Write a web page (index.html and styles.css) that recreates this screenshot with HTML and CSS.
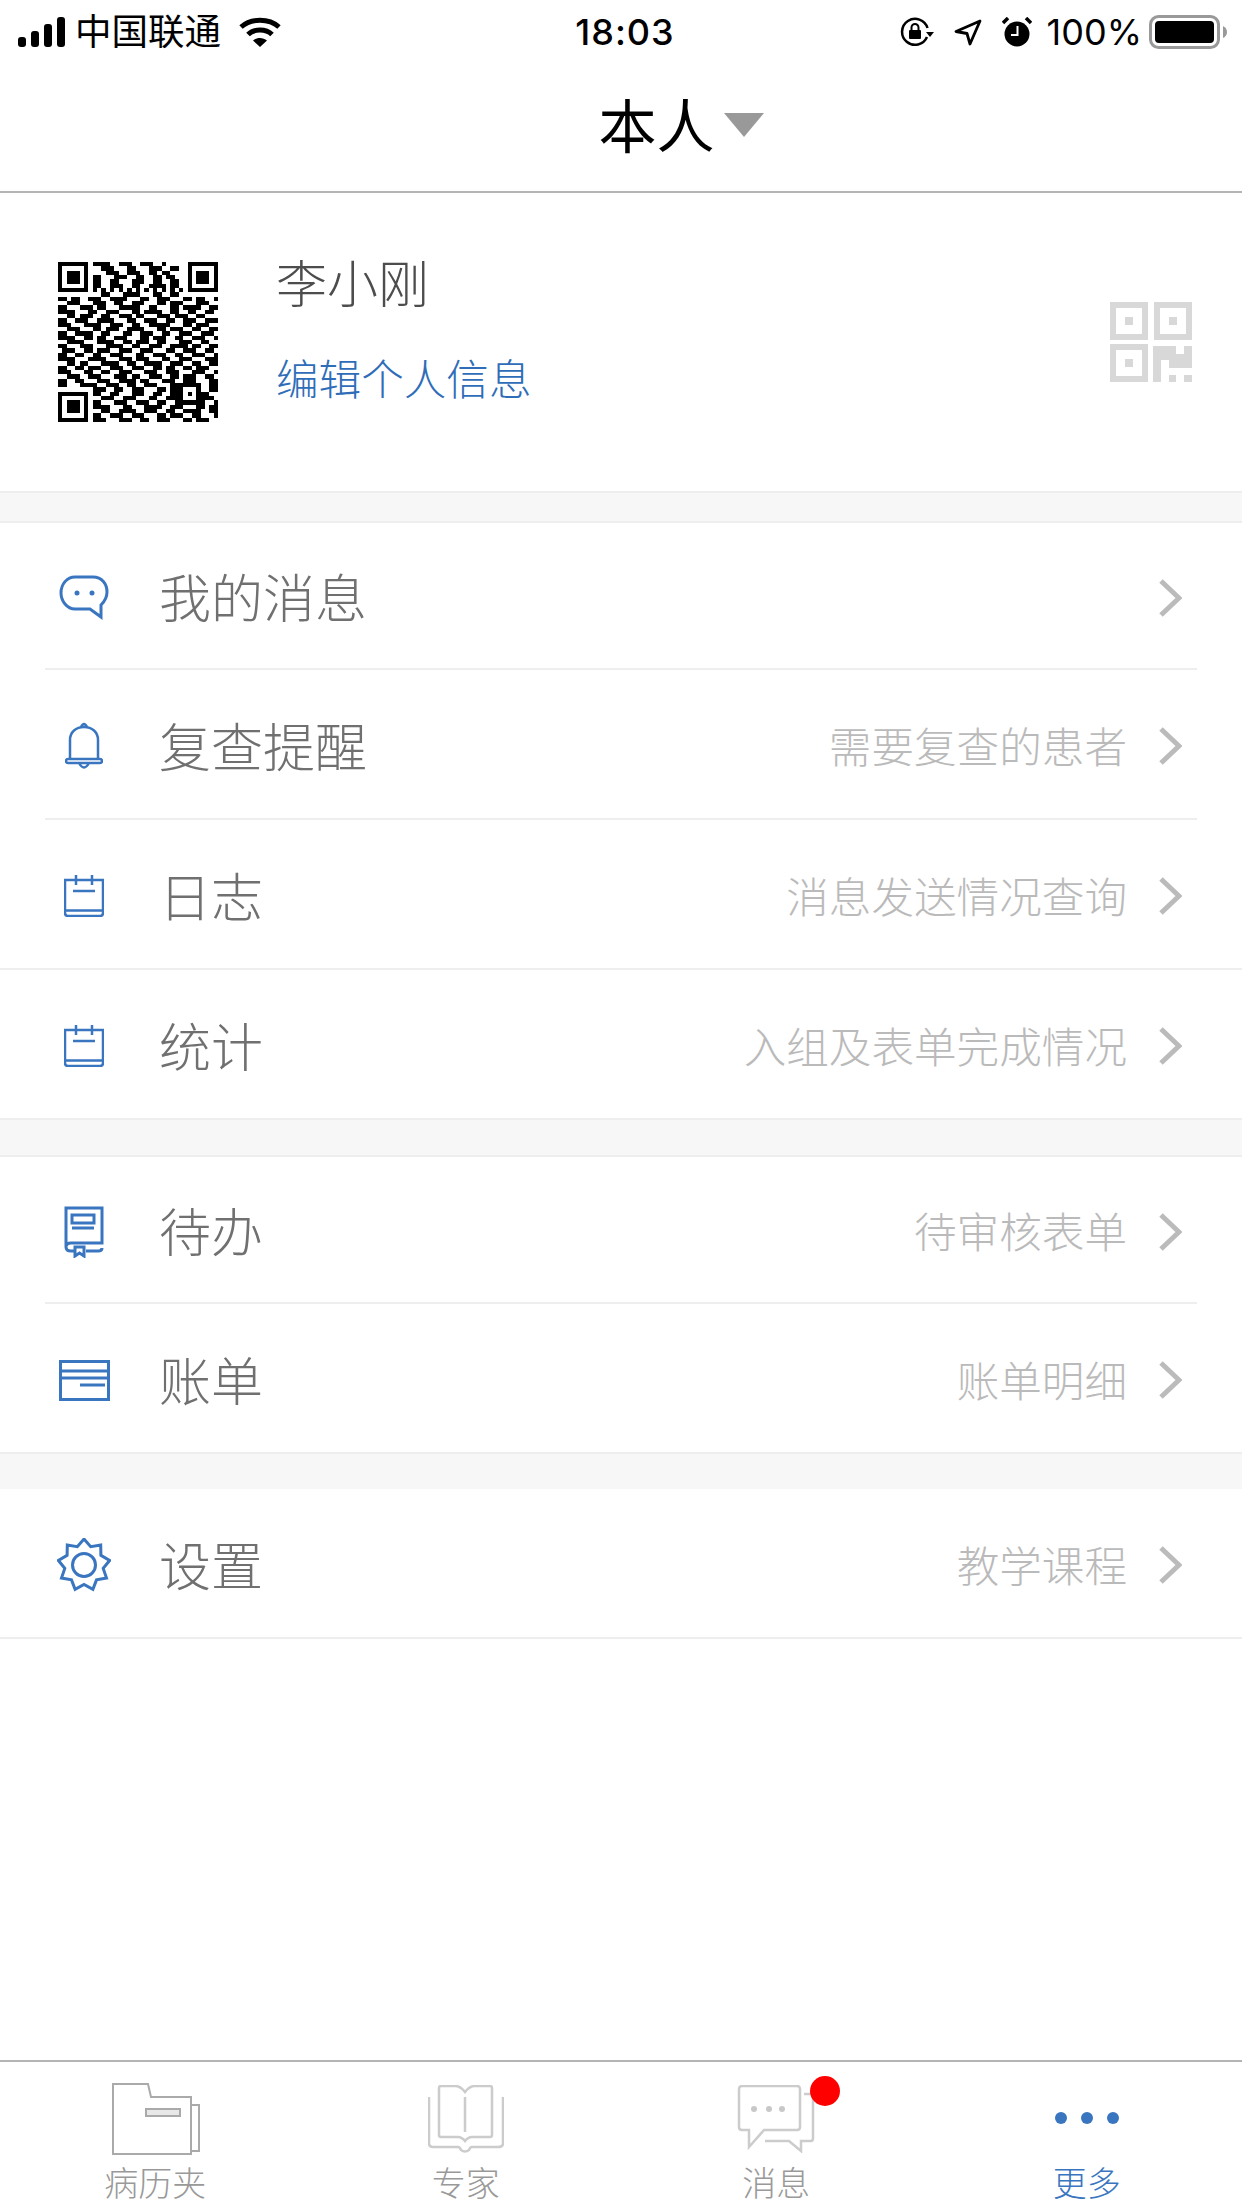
FILE: index.html
```html
<!DOCTYPE html>
<html lang="zh-CN">
<head>
    <meta charset="UTF-8">
    <meta name="viewport" content="width=device-width, initial-scale=1.0">
    <title>更多</title>
    <link rel="stylesheet" href="styles.css">
</head>
<body>
    <div class="status-bar">
        <div class="status-left">
            <svg class="signal" width="48" height="30" viewBox="0 0 48 30">
                <rect x="0" y="20" width="8" height="10" rx="3"/>
                <rect x="13" y="14" width="8" height="16" rx="3"/>
                <rect x="26" y="7" width="8" height="23" rx="3"/>
                <rect x="39" y="0" width="8" height="30" rx="3"/>
            </svg>
            <span class="carrier">中国联通</span>
            <svg class="wifi" width="42" height="30" viewBox="0 0 42 30">
                <path d="M2 10C12 1 30 1 40 10M9 17.5C15 11.5 27 11.5 33 17.5" fill="none" stroke="#000" stroke-width="5"/>
                <path d="M14 23.5C18 20 24 20 28 23.5L21 30Z"/>
            </svg>
        </div>
        <div class="status-time">18:03</div>
        <div class="status-right">
            <svg width="34" height="30" viewBox="0 0 34 30">
                <path d="M27 20A13 13 0 1 1 27.500 11" fill="none" stroke="#000" stroke-width="2.500"/>
                <path d="M34 15H26L30 20Z"/>
                <rect x="9" y="13" width="12" height="9" rx="1"/>
                <path d="M11.500 13V10.500A3.500 3.500 0 0 1 18.500 10.500V13" fill="none" stroke="#000" stroke-width="2"/>
            </svg>
            <svg class="arrow" width="28" height="27" viewBox="0 0 28 27">
                <path d="M26 2L2 12.500L13 14.500L16 25Z" fill="none" stroke="#000" stroke-width="2.800" stroke-linejoin="round"/>
            </svg>
            <svg class="alarm" width="30" height="30" viewBox="0 0 30 30">
                <circle cx="15" cy="17" r="12.500"/>
                <path d="M1 6L6 1M29 6L24 1" stroke="#000" stroke-width="3.500"/>
                <path d="M15.500 9V18H9" fill="none" stroke="#fff" stroke-width="2"/>
            </svg>
            <span class="battery-text">100%</span>
            <svg width="79" height="34" viewBox="0 0 79 34">
                <rect x="1.500" y="1.500" width="68" height="31" rx="8" fill="none" stroke="#999" stroke-width="3"/>
                <rect x="6" y="6" width="59" height="22" rx="4"/>
                <path d="M74 11Q78 13 78 17Q78 21 74 23Z" fill="#999"/>
            </svg>
        </div>
    </div>

    <div class="nav-bar">
        <span class="nav-title">本人</span>
        <span class="nav-caret"></span>
    </div>

    <div class="profile">
        <svg id="qrCode" class="qr-code" width="160" height="160" viewBox="0 0 37 37" shape-rendering="crispEdges"></svg>
        <div class="profile-info">
            <div class="profile-name">李小刚</div>
            <div class="profile-edit">编辑个人信息</div>
        </div>
        <svg class="qr-icon" width="82" height="81" viewBox="0 0 82 81">
            <path fill-rule="evenodd" d="M0 0H38V38H0ZM6 6V32H32V6ZM15 15H23V23H15Z"/>
            <path fill-rule="evenodd" d="M44 0H82V38H44ZM50 6V32H76V6ZM59 15H67V23H59Z"/>
            <path fill-rule="evenodd" d="M0 42H38V80H0ZM6 48V74H32V48ZM15 57H23V65H15Z"/>
            <path d="M43 44H66V52H74V44H82V66H59V58H51V80H43ZM59 73H66V80H59ZM74 73H82V80H74Z"/>
        </svg>
    </div>

    <div class="band band-first"></div>

    <div class="group">
        <div class="row inset first">
            <span class="row-icon">
                <svg width="50" height="45" viewBox="0 0 50 45">
                    <path class="thick" d="M16 2H34C43 2 48 9 48 17C48 23 46 26 42 30V42L31 34H16C8 34 2 26 2 18C2 9 8 2 16 2Z"/>
                    <circle class="dot" cx="18" cy="18" r="2.500"/>
                    <circle class="dot" cx="33" cy="18" r="2.500"/>
                </svg>
            </span>
            <span class="row-label">我的消息</span>
            <span class="row-chevron"><svg width="24" height="40" viewBox="0 0 24 40"><path d="M3 3L21 20L3 37"/></svg></span>
        </div>
        <div class="row inset">
            <span class="row-icon">
                <svg width="38" height="48" viewBox="0 0 38 48">
                    <path d="M5 37V18C5 10 11 5 19 5C27 5 33 10 33 18V37M3 37H35Q37 37 37 39Q37 41 35 41H3Q1 41 1 39Q1 37 3 37ZM16 5Q19 -1 22 5M14 41Q19 50 24 41"/>
                </svg>
            </span>
            <span class="row-label">复查提醒</span>
            <span class="row-hint">需要复查的患者</span>
            <span class="row-chevron"><svg width="24" height="40" viewBox="0 0 24 40"><path d="M3 3L21 20L3 37"/></svg></span>
        </div>
        <div class="row">
            <span class="row-icon">
                <svg width="40" height="42" viewBox="0 0 40 42">
                    <path d="M1 5H39V38Q39 41 36 41H4Q1 41 1 38ZM1 35.500H39M12 0V10M28 0V10M9 16H31"/>
                </svg>
            </span>
            <span class="row-label">日志</span>
            <span class="row-hint">消息发送情况查询</span>
            <span class="row-chevron"><svg width="24" height="40" viewBox="0 0 24 40"><path d="M3 3L21 20L3 37"/></svg></span>
        </div>
        <div class="row">
            <span class="row-icon">
                <svg width="40" height="42" viewBox="0 0 40 42">
                    <path d="M1 5H39V38Q39 41 36 41H4Q1 41 1 38ZM1 35.500H39M12 0V10M28 0V10M9 16H31"/>
                </svg>
            </span>
            <span class="row-label">统计</span>
            <span class="row-hint">入组及表单完成情况</span>
            <span class="row-chevron"><svg width="24" height="40" viewBox="0 0 24 40"><path d="M3 3L21 20L3 37"/></svg></span>
        </div>
    </div>

    <div class="band band-second"></div>

    <div class="group">
        <div class="row inset first">
            <span class="row-icon">
                <svg width="40" height="52" viewBox="0 0 40 52">
                    <path class="thick" d="M2 41V2H38V37H7Q2 37 2 41Q2 45 7 45H10M22 45H34Q38 45 38 42M8 9H30V17H8ZM8 22H30"/>
                    <path class="thick" d="M11 41H20V50L15.500 47L11 50Z"/>
                </svg>
            </span>
            <span class="row-label">待办</span>
            <span class="row-hint">待审核表单</span>
            <span class="row-chevron"><svg width="24" height="40" viewBox="0 0 24 40"><path d="M3 3L21 20L3 37"/></svg></span>
        </div>
        <div class="row">
            <span class="row-icon">
                <svg width="51" height="41" viewBox="0 0 51 41">
                    <path class="thick" d="M1.500 1.500H49.500V39.500H1.500ZM1.500 11H49.500M1.500 18H49.500M21 25H46"/>
                </svg>
            </span>
            <span class="row-label">账单</span>
            <span class="row-hint">账单明细</span>
            <span class="row-chevron"><svg width="24" height="40" viewBox="0 0 24 40"><path d="M3 3L21 20L3 37"/></svg></span>
        </div>
    </div>

    <div class="band band-third"></div>

    <div class="group">
        <div class="row">
            <span class="row-icon">
                <svg width="54" height="54" viewBox="0 0 54 54">
                    <polygon class="thick" points="27,1 33.700,8.700 43.700,7.100 43.900,17.300 52.600,22.500 46.200,30.400 49.500,40 39.500,41.900 35.900,51.400 27,46.500 18.100,51.400 14.500,41.900 4.500,40 7.800,30.400 1.400,22.500 10.100,17.300 10.300,7.100 20.300,8.700"/>
                    <circle class="thick" cx="27" cy="27" r="11.500"/>
                </svg>
            </span>
            <span class="row-label">设置</span>
            <span class="row-hint">教学课程</span>
            <span class="row-chevron"><svg width="24" height="40" viewBox="0 0 24 40"><path d="M3 3L21 20L3 37"/></svg></span>
        </div>
    </div>

    <div class="spacer"></div>

    <div class="tab-bar">
        <div class="tab">
            <span class="tab-icon">
                <svg class="folder" width="88" height="72" viewBox="0 0 88 72">
                    <path d="M1 1H36L39 14H79V71H1ZM79 22H87V68H79"/>
                    <rect x="34" y="26" width="34" height="7" fill="#e8e8e8"/>
                </svg>
            </span>
            <span class="tab-label">病历夹</span>
        </div>
        <div class="tab">
            <span class="tab-icon">
                <svg class="light" width="76" height="68" viewBox="0 0 76 68">
                    <path d="M37 7C34 3 30 1 27 1H13Q11 1 11 3V50Q11 52 13 52H30Q34 52 37 56Q40 52 44 52H62Q64 52 64 50V3Q64 1 62 1H47C44 1 40 3 37 7ZM37 12V47M1 12V58Q1 62 5 62H30Q32 62 33 65Q37 68 41 65Q42 62 44 62H70Q75 62 75 58V12"/>
                </svg>
            </span>
            <span class="tab-label">专家</span>
        </div>
        <div class="tab">
            <span class="tab-icon has-badge">
                <svg class="light" width="78" height="68" viewBox="0 0 78 68">
                    <path d="M5 1H60Q63 1 63 4V42Q63 45 60 45H27L12 62V45H5Q2 45 2 42V4Q2 1 5 1ZM28 56H52L64 66V56H74Q76 56 76 53V9H67"/>
                    <circle class="dots" cx="17" cy="24" r="3"/>
                    <circle class="dots" cx="32" cy="24" r="3"/>
                    <circle class="dots" cx="45" cy="24" r="3"/>
                </svg>
                <span class="badge"></span>
            </span>
            <span class="tab-label">消息</span>
        </div>
        <div class="tab active">
            <span class="tab-icon">
                <span class="more-dots"><i></i><i></i><i></i></span>
            </span>
            <span class="tab-label">更多</span>
        </div>
    </div>

    <script src="qr.js"></script>
</body>
</html>
```

FILE: styles.css
```css
* {
    box-sizing: border-box;
}
body {
    margin: 0;
    width: 1242px;
    height: 2208px;
    overflow: hidden;
    display: flex;
    flex-direction: column;
    background-color: #fff;
    font-family: "Noto Sans CJK SC", "Noto Sans", sans-serif;
    font-weight: 300;
}

/* status bar */
.status-bar {
    height: 64px;
    padding: 0 14px 0 18px;
    display: grid;
    grid-template-columns: 1fr auto 1fr;
    align-items: center;
    color: #000;
}
.status-left {
    display: flex;
    align-items: center;
}
.carrier {
    margin: 0 0 5px 9px;
    font-size: 36.500px;
    line-height: 44px;
    font-weight: 400;
}
.wifi {
    margin-left: 18px;
}
.status-time {
    margin-left: 4px;
    font-family: Inter, "Liberation Sans", sans-serif;
    font-size: 36px;
    letter-spacing: 1px;
    font-weight: 500;
}
.status-right {
    display: flex;
    align-items: center;
    justify-content: flex-end;
}
.status-right .arrow {
    margin-left: 20px;
}
.status-right .alarm {
    margin-left: 20px;
}
.battery-text {
    margin: 0 7px 0 15px;
    font-family: Inter, "Liberation Sans", sans-serif;
    font-size: 36px;
    font-weight: 400;
}

/* nav */
.nav-bar {
    height: 129px;
    padding: 0 0 10px 120px;
    display: flex;
    align-items: center;
    justify-content: center;
    border-bottom: 2px solid #b4b4b4;
}
.nav-title {
    font-size: 58px;
    font-weight: 400;
    color: #000;
}
.nav-caret {
    width: 0;
    height: 0;
    margin: 4px 0 0 9px;
    border-left: 20px solid transparent;
    border-right: 20px solid transparent;
    border-top: 24px solid #999;
}

/* profile */
.profile {
    height: 298px;
    padding: 0 50px 0 58px;
    display: flex;
    align-items: center;
}
.qr-code {
    flex: none;
}
.profile-info {
    flex: 1;
    margin-left: 58px;
    padding-bottom: 28px;
    display: flex;
    flex-direction: column;
    gap: 34px;
}
.profile-name {
    font-size: 51px;
    line-height: 64px;
    color: #4d4d4d;
}
.profile-edit {
    font-size: 42.600px;
    line-height: 60px;
    color: #2f6db8;
}
.qr-icon {
    fill: #d8d8d8;
}

/* gray bands between groups */
.band {
    background-color: #f7f7f7;
    border-bottom: 2px solid #eee;
}
.band-first {
    height: 32px;
    border-top: 2px solid #eee;
}
.band-second {
    height: 37px;
}
.band-third {
    height: 35px;
    border-bottom: 0;
}

/* rows */
.row {
    height: 150px;
    padding: 0 60px 0 45px;
    display: flex;
    align-items: center;
    border-bottom: 2px solid #eee;
}
.row.inset {
    margin: 0 45px;
    padding: 0 15px 0 0;
}
.row.first {
    height: 147px;
}
.row-icon {
    width: 78px;
    margin-top: 4px;
    flex: none;
    display: flex;
    justify-content: center;
}
.row-icon svg {
    fill: none;
    stroke: #3a76c0;
    stroke-width: 2.500;
}
.row-icon .thick {
    stroke-width: 3;
}
.row-icon .dot {
    fill: #3a76c0;
    stroke: none;
}
.row-label {
    flex: 1;
    margin-left: 36px;
    font-size: 52px;
    color: #707070;
}
.row-hint {
    font-size: 42.600px;
    color: #bababa;
}
.row-chevron {
    margin: 4px 0 0 31px;
    display: flex;
}
.row-chevron svg {
    fill: none;
    stroke: #bbb;
    stroke-width: 5;
}
.spacer {
    flex: 1;
}

/* tab bar */
.tab-bar {
    height: 148px;
    flex: none;
    display: grid;
    grid-template-columns: repeat(4, 1fr);
    border-top: 2px solid #b4b4b4;
    overflow: hidden;
}
.tab {
    padding-top: 21px;
    display: flex;
    flex-direction: column;
    align-items: center;
}
.tab-icon {
    height: 72px;
    display: flex;
    align-items: center;
    justify-content: center;
    position: relative;
}
.tab-icon svg {
    fill: none;
    stroke: #aaa;
    stroke-width: 2;
}
.tab-icon .folder {
    margin-left: 2px;
}
.tab-icon .light {
    stroke: #ccc;
    stroke-width: 2.500;
}
.tab-icon .dots {
    fill: #c8c8c8;
    stroke: none;
}
.badge {
    position: absolute;
    top: -7px;
    right: -25px;
    width: 30px;
    height: 30px;
    border-radius: 50%;
    background-color: #f00;
}
.tab-label {
    margin-top: 5px;
    font-size: 34px;
    line-height: 44px;
    color: #999;
}
.tab.active .tab-label {
    color: #3a76c0;
}
.more-dots {
    margin-bottom: 2px;
    display: flex;
    gap: 14px;
}
.more-dots i {
    width: 12px;
    height: 12px;
    border-radius: 50%;
    background-color: #3a76c0;
}
```

FILE: qr.js
```js
// QR code modules, one string per row (position squares are stamped on top)
const rows = [
    "00000000" + "111100111001110010000" + "00000000",
    "00000000" + "001110001100011100110" + "00000000",
    "00000000" + "000111001110011011000" + "00000000",
    "00000000" + "110001110011001101100" + "00000000",
    "00000000" + "110011000111001100110" + "00000000",
    "00000000" + "110011100110011110110" + "00000000",
    "00000000" + "101010101010101010101" + "00000000",
    "00000000" + "001100011110001100110" + "00000000",
    "1101100111001111000110011100011011001",
    "0011100011100110011100011011100011100",
    "1100011101100011111001100011011110011",
    "1111000110011100011011110011001100110",
    "0011011100110011101100011101110011000",
    "1100111001111000110011100110011100111",
    "1110001111001110011001111100011011100",
    "0011100011011100111100011011100110011",
    "1100111100110001100111001100111001110",
    "1111001101100111000110111001100111001",
    "0011110001111001101110011000111001100",
    "1100011100011110011001110011110110011",
    "0111001101110011100111000110011100110",
    "1100110011001110001100111001100111001",
    "1111000111100011101110001100111000111",
    "0011011000111100110011110011100110011",
    "1100110111001110011100110110011011100",
    "1110001100110011100011100111000111001",
    "0011100111000111011001110011011100110",
    "1100110001110011110110001110011100011",
    "1100011110011100110011100011100110011",
    "0000000011100110011100011011100110011",
    "00000000" + "11001100011100110011100011100",
    "00000000" + "00111001110001100111011001110",
    "00000000" + "11000111001110011001100111001",
    "00000000" + "11110001100011110011100011011",
    "00000000" + "00110011110011100110011110011",
    "00000000" + "11001110011100011011100110001",
    "00000000" + "11100011100110011100011011100"
];

const grid = rows.map(r => r.split("").map(Number));

// Stamp concentric rings around a centre, "pick" says which rings are dark
function stamp(cx, cy, size, pick) {
    for (let y = cy - size; y <= cy + size; y++) {
        for (let x = cx - size; x <= cx + size; x++) {
            const ring = Math.max(Math.abs(x - cx), Math.abs(y - cy));
            grid[y][x] = pick(ring) ? 1 : 0;
        }
    }
}

const finder = ring => ring !== 2;
stamp(3, 3, 3, finder);
stamp(33, 3, 3, finder);
stamp(3, 33, 3, finder);
stamp(30, 30, 2, ring => ring !== 1);

let d = "";
grid.forEach((row, y) => {
    row.forEach((cell, x) => {
        if (cell) d += "M" + x + " " + y + "h1v1h-1z";
    });
});

const path = document.createElementNS("http://www.w3.org/2000/svg", "path");
path.setAttribute("d", d);
document.getElementById("qrCode").appendChild(path);
```
